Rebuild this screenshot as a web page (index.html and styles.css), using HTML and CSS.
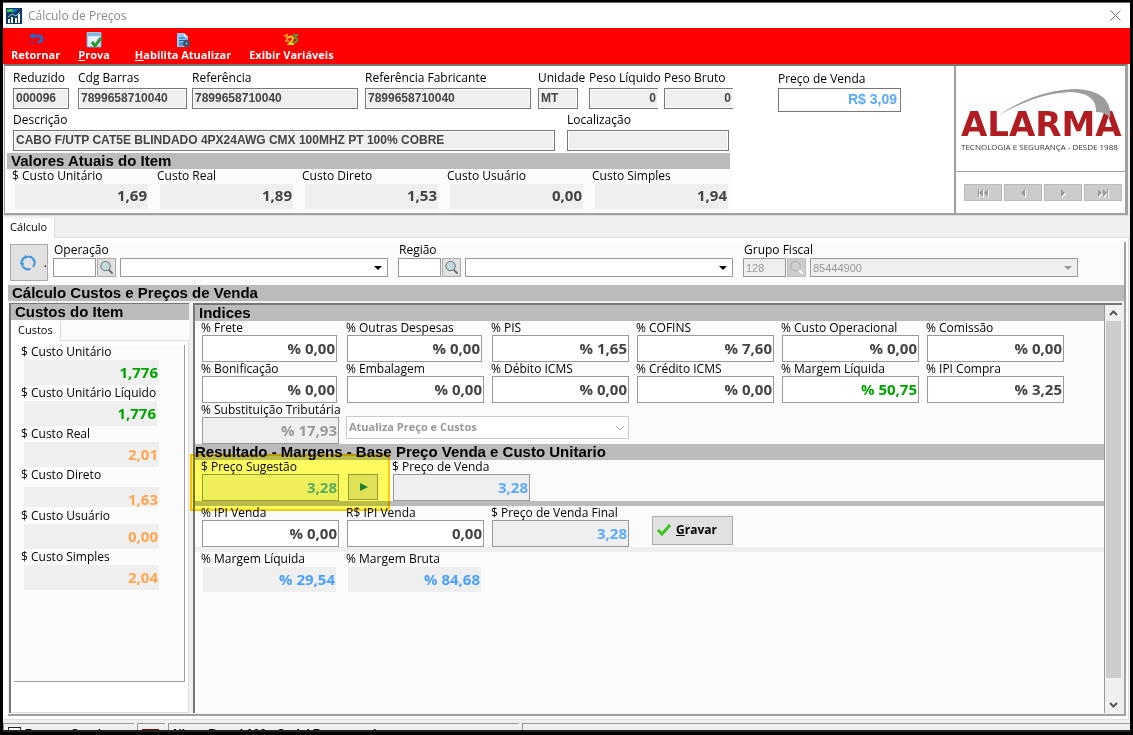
FILE: index.html
```html
<!DOCTYPE html>
<html lang="pt-BR">
<head>
<meta charset="utf-8">
<title>Cálculo de Preços</title>
<link rel="stylesheet" href="styles.css">
</head>
<body>
<div class="window">
  <header class="titlebar">
    <svg class="app-icon" viewBox="0 0 16 16" aria-hidden="true"><rect width="16" height="16" fill="#0d3a63"/><path d="M1 1h8l-2 3H1z" fill="#3ec54a"/><path d="M6 1h6l-4 4z" fill="#1473d4"/><path d="M2 11h2v4H2zM5 9h2v6H5zM9 10h2v5H9zM12 6h2v9h-2z" fill="#fff"/><path d="M2 9l4-3 4 2 4-4" stroke="#9ec9ea" fill="none"/></svg>
    <h1 class="title">Cálculo de Preços</h1>
    <button class="close" aria-label="Fechar"><svg viewBox="0 0 11 11"><path d="M.5.5l10 10M10.500.5l-10 10" stroke="#777" fill="none"/></svg></button>
  </header>

  <nav class="toolbar">
    <button class="tool"><svg viewBox="0 0 16 16"><path d="M5 4h5q4 0 4 3t-4 3" fill="none" stroke="#1671d9" stroke-width="2.500"/><path d="M1 4L6 1v6z" fill="#1671d9"/><path d="M2.500 9v3M5.500 9v3M8 10v2" stroke="#5a3a9a"/></svg><span>Retornar</span></button>
    <button class="tool proof"><svg viewBox="0 0 16 16"><path d="M1 0h14v15H1z" fill="#d9ecf6" stroke="#6ba6cc"/><path d="M2 1h12v3H2z" fill="#7fb9e0"/><path d="M3 6h9M3 8h7" stroke="#fff"/><path d="M6 10l3 4 6-8" fill="none" stroke="#2f9a38" stroke-width="3"/></svg><span><u>P</u>rova</span></button>
    <button class="tool"><svg viewBox="0 0 16 16"><path d="M2 1h7l4 4v10H2z" fill="#8fc7f5"/><path d="M9 1v4h4z" fill="#d9eeff"/><path d="M4 6h6M4 8.500h6M4 11h4M4 13h4" stroke="#1762ab"/><circle cx="11.500" cy="11.500" r="2.500" fill="none" stroke="#3b5068" stroke-width="2"/><path d="M11.500 7.500v8M7.500 11.500h8M9 9l5 5M14 9l-5 5" stroke="#3b5068"/><circle cx="11.500" cy="11.500" r="1" fill="#9fb9cf"/></svg><span><u>H</u>abilita Atualizar</span></button>
    <button class="tool"><svg viewBox="0 0 16 16"><path d="M1 4l3-1v6M2 9h4" stroke="#ff8a1f" stroke-width="2" fill="none"/><path d="M5 6q3-3 5 0 0 2-4 6h5" stroke="#ffd21f" stroke-width="2" fill="none"/><path d="M10 3h4l-2 3q4 1 1 4-2 1-3 0" stroke="#4d9f32" stroke-width="2" fill="none"/></svg><span>Exibir Variáveis</span></button>
  </nav>

  <section class="summary">
    <div class="item">
      <div class="row ids">
        <label class="field"><span>Reduzido</span><input class="code" value="000096" readonly></label>
        <label class="field"><span>Cdg Barras</span><input class="code" value="7899658710040" readonly></label>
        <label class="field"><span>Referência</span><input class="code" value="7899658710040" readonly></label>
        <label class="field"><span>Referência Fabricante</span><input class="code" value="7899658710040" readonly></label>
        <label class="field unit"><span>Unidade</span><input class="code" value="MT" readonly></label>
        <label class="field"><span>Peso Líquido</span><input class="code weight" value="0" readonly></label>
        <label class="field"><span>Peso Bruto</span><input class="code weight" value="0" readonly></label>
      </div>
      <div class="row descr">
        <label class="field"><span>Descrição</span><input class="code" value="CABO F/UTP CAT5E BLINDADO 4PX24AWG CMX 100MHZ PT 100% COBRE" readonly></label>
        <label class="field"><span>Localização</span><input class="code" value="" readonly></label>
      </div>
      <h2 class="bar">Valores Atuais do Item</h2>
      <div class="current">
        <label class="cost"><span>$ Custo Unitário</span><input class="num flat" value="1,69" readonly></label>
        <label class="cost"><span>Custo Real</span><input class="num flat" value="1,89" readonly></label>
        <label class="cost"><span>Custo Direto</span><input class="num flat" value="1,53" readonly></label>
        <label class="cost"><span>Custo Usuário</span><input class="num flat" value="0,00" readonly></label>
        <label class="cost"><span>Custo Simples</span><input class="num flat" value="1,94" readonly></label>
      </div>
    </div>
    <div class="sale">
      <label class="field"><span>Preço de Venda</span><input class="price" value="R$ 3,09"></label>
    </div>
    <aside class="brand">
      <div class="logo">
        <svg class="swoosh" viewBox="0 0 120 30" aria-hidden="true"><path d="M0 29Q40 1 82 1Q117 4 114 30Q108 23 100 24Q101 5 74 4Q40 5 0 29z" fill="#9d9d9b"/></svg>
        <strong>ALARMA</strong>
        <small>TECNOLOGIA E SEGURANÇA - DESDE 1988</small>
      </div>
      <div class="pager">
        <button aria-label="Primeiro" disabled><svg viewBox="0 0 12 10"><path d="M1 1h1v8H1zM6 1v8L2 5zM11 1v8L7 5z"/></svg></button>
        <button aria-label="Anterior" disabled><svg viewBox="0 0 12 10"><path d="M8 1v8L4 5z"/></svg></button>
        <button aria-label="Próximo" disabled><svg viewBox="0 0 12 10"><path d="M4 1l4 4-4 4z"/></svg></button>
        <button aria-label="Último" disabled><svg viewBox="0 0 12 10"><path d="M10 1h1v8h-1zM6 1v8l4-4zM1 1v8l4-4z"/></svg></button>
      </div>
    </aside>
  </section>

  <div class="tabs"><button class="tab">Cálculo</button></div>

  <main class="page">
    <div class="filters">
      <button class="refresh" aria-label="Atualizar"><svg viewBox="0 0 16 16"><g fill="none" stroke="#3a95dc" stroke-width="2"><path d="M6 1.500Q1 4 1.500 9"/><path d="M3 12Q7 16 10.500 13.500"/><path d="M13 12Q16 8 13.500 4"/><path d="M8 1.500q3 0 5 2"/></g><path d="M5 0l4 2-4 2zM0 8h4l-1 5zM12 3l3 1-2 3z" fill="#3a95dc"/></svg><span>.</span></button>
      <div class="lookup">
        <label for="op">Operação</label>
        <div class="lookup-row"><input id="op"><button class="search" aria-label="Buscar operação"><svg viewBox="0 0 16 16"><circle cx="7" cy="6.500" r="5" fill="#c4dbe0" stroke="#666"/><path d="M10.500 10.500l4 4" stroke="#666" stroke-width="2"/></svg></button><span class="combo"><select aria-label="Operação"><option></option></select><i class="caret"></i></span></div>
      </div>
      <div class="lookup">
        <label for="reg">Região</label>
        <div class="lookup-row"><input id="reg"><button class="search" aria-label="Buscar região"><svg viewBox="0 0 16 16"><circle cx="7" cy="6.500" r="5" fill="#c4dbe0" stroke="#666"/><path d="M10.500 10.500l4 4" stroke="#666" stroke-width="2"/></svg></button><span class="combo"><select aria-label="Região"><option></option></select><i class="caret"></i></span></div>
      </div>
      <div class="lookup off">
        <label for="grp">Grupo Fiscal</label>
        <div class="lookup-row"><input id="grp" value="128" disabled><button class="search" aria-label="Buscar grupo fiscal" disabled><svg viewBox="0 0 16 16"><circle cx="7" cy="6.500" r="5" fill="#d0d0d0" stroke="#aaa"/><path d="M10.500 10.500l4 4" stroke="#fff" stroke-width="2"/></svg></button><span class="combo"><select aria-label="Grupo Fiscal" disabled><option>85444900</option></select><i class="caret"></i></span></div>
      </div>
    </div>
    <h2 class="bar">Cálculo Custos e Preços de Venda</h2>

    <div class="panels">
      <section class="costs">
        <h2 class="bar">Custos do Item</h2>
        <div class="subtabs"><button class="tab">Custos</button></div>
        <div class="costs-page">
          <div class="costs-list">
            <label class="cost"><span>$ Custo Unitário</span><input class="num flat green" value="1,776" readonly></label>
            <label class="cost"><span>$ Custo Unitário Líquido</span><input class="num flat green narrow" value="1,776" readonly></label>
            <label class="cost"><span>$ Custo Real</span><input class="num flat orange" value="2,01" readonly></label>
            <label class="cost"><span>$ Custo Direto</span><input class="num flat orange short" value="1,63" readonly></label>
            <label class="cost"><span>$ Custo Usuário</span><input class="num flat orange" value="0,00" readonly></label>
            <label class="cost"><span>$ Custo Simples</span><input class="num flat orange" value="2,04" readonly></label>
          </div>
        </div>
      </section>

      <section class="indices">
        <div class="indices-body">
          <h2 class="bar">Indices</h2>
          <div class="grid">
            <label class="cell"><span>% Frete</span><input class="num narrow" value="% 0,00"></label>
            <label class="cell"><span>% Outras Despesas</span><input class="num narrow" value="% 0,00"></label>
            <label class="cell"><span>% PIS</span><input class="num" value="% 1,65"></label>
            <label class="cell"><span>% COFINS</span><input class="num" value="% 7,60"></label>
            <label class="cell"><span>% Custo Operacional</span><input class="num" value="% 0,00"></label>
            <label class="cell"><span>% Comissão</span><input class="num" value="% 0,00"></label>
            <label class="cell"><span>% Bonificação</span><input class="num narrow" value="% 0,00"></label>
            <label class="cell"><span>% Embalagem</span><input class="num" value="% 0,00"></label>
            <label class="cell"><span>% Débito ICMS</span><input class="num" value="% 0,00"></label>
            <label class="cell"><span>% Crédito ICMS</span><input class="num" value="% 0,00"></label>
            <label class="cell"><span>% Margem Líquida</span><input class="num green" value="% 50,75"></label>
            <label class="cell"><span>% IPI Compra</span><input class="num" value="% 3,25"></label>
            <label class="cell"><span>% Substituição Tributária</span><input class="num off" value="% 17,93" disabled></label>
            <div class="mode"><select aria-label="Modo de atualização" disabled><option>Atualiza Preço e Custos</option></select><svg viewBox="0 0 10 6"><path d="M1 1l4 4 4-4" fill="none" stroke="#aaa"/></svg></div>
          </div>
          <div class="result">
            <h2 class="bar">Resultado - Margens - Base Preço Venda e Custo Unitario</h2>
            <div class="suggest">
              <label class="cell"><span>$ Preço Sugestão</span><input class="num off blue" value="3,28" readonly></label>
              <button class="apply" aria-label="Aplicar preço sugerido"><svg viewBox="0 0 10 8"><path d="M1 0l8 4-8 4z" fill="#1b7f78"/></svg></button>
              <label class="cell"><span>$ Preço de Venda</span><input class="num off blue" value="3,28" readonly></label>
            </div>
            <div class="highlight"></div>
          </div>
          <hr class="rule">
          <div class="grid">
            <label class="cell"><span>% IPI Venda</span><input class="num" value="% 0,00"></label>
            <label class="cell"><span>R$ IPI Venda</span><input class="num" value="0,00"></label>
            <label class="cell"><span>$ Preço de Venda Final</span><input class="num off blue" value="3,28" readonly></label>
            <button class="save"><svg viewBox="0 0 14 12"><path d="M1 6l4 4 8-9" fill="none" stroke="#3cc41f" stroke-width="3"/></svg><span><u>G</u>ravar</span></button>
          </div>
          <hr class="rule light">
          <div class="grid margins">
            <label class="cost"><span>% Margem Líquida</span><input class="num flat sky" value="% 29,54" readonly></label>
            <label class="cost"><span>% Margem Bruta</span><input class="num flat sky" value="% 84,68" readonly></label>
          </div>
        </div>
        <div class="scroll">
          <button aria-label="Rolar para cima"><svg viewBox="0 0 9 6"><path d="M1 5l3.500-3.500L8 5" fill="none" stroke="#555" stroke-width="2"/></svg></button>
          <div class="track"><div class="thumb"></div></div>
          <button aria-label="Rolar para baixo"><svg viewBox="0 0 9 6"><path d="M1 1l3.500 3.500L8 1" fill="none" stroke="#555" stroke-width="2"/></svg></button>
        </div>
      </section>
    </div>
  </main>

  <footer class="status">
    <div class="slot first"><i class="box"></i>Pessoa Geral</div>
    <div class="slot second"><i class="flag"></i></div>
    <div class="slot third">Nivea Brand 100 - Serial Programado</div>
    <div class="slot"></div>
  </footer>
</div>
</body>
</html>
```
FILE: styles.css
```css
* { box-sizing: border-box; }
html, body { height: 100%; }
body { margin: 0; padding: 2px 3px 3px; background: #000; font: 12px/14px "Open Sans", "Noto Sans", sans-serif; color: #000; overflow: hidden; }
button, input, select { font: inherit; color: inherit; margin: 0; padding: 0; border-radius: 0; min-width: 0; }
button { border: 0; background: none; }
h1, h2 { margin: 0; }
svg { display: block; }
label { display: block; white-space: nowrap; }

.window { display: flex; flex-direction: column; height: 100%; background: #f0f0f0; border-top: 1px solid #666; border-bottom: 2px solid #222; overflow: hidden; }

.titlebar { display: flex; align-items: center; flex: none; height: 25px; padding: 0 9px 0 3px; background: #fff; }
.app-icon { width: 16px; height: 16px; }
.title { flex: 1; margin-left: 6px; font-size: 12px; font-weight: 400; color: #888; }
.close svg { width: 11px; height: 11px; }

.toolbar { display: flex; flex: none; height: 36px; gap: 18px; padding: 4px 8px 0; background: #f00; }
.tool { display: flex; flex-direction: column; align-items: center; color: #fff; font: bold 11px/14px "Open Sans", sans-serif; }
.tool svg { width: 16px; height: 16px; flex: none; }
.proof { margin-right: 7px; }

.summary { display: flex; flex: none; height: 151px; margin: 0 2px 0 1px; background: #fff; border: solid #a0a0a0; border-width: 2px 3px 2px 1px; border-top-color: #777; }
.item { flex: none; width: 730px; padding: 5px 0 0 2px; }
.row { display: grid; padding-left: 6px; height: 42px; }
.ids { grid-template-columns: 65px 114px 173px 173px 51px 75px 69px; }
.ids .field { padding-right: 7px; }
.ids .field:first-child { padding-right: 9px; }
.ids .field:nth-child(2) { padding-right: 5px; }
.ids .unit { padding-right: 11px; }
.ids .unit ~ .field { padding-right: 0; }
.ids .unit + .field { padding-right: 6px; }
.descr { grid-template-columns: 542px 162px; column-gap: 12px; }
.field span { display: block; height: 17px; line-height: 13px; }
.field input { display: block; width: 100%; }
.code { height: 21px; padding: 0 2px 2px; border: 1px solid #777; background: #efefef; box-shadow: inset 0 0 0 1px #fff; color: #444; font: bold 12px "Liberation Sans", sans-serif; }
.weight { text-align: right; border-right: 0; }
.bar { height: 16px; padding-left: 4px; background: #bbb; font: bold 15px/16px "Liberation Sans", Arial, sans-serif; white-space: nowrap; }
.item .bar { width: 723px; margin-top: -2px; }
.current { display: grid; grid-template-columns: repeat(5, 145px); width: 726px; padding: 0 0 1px 5px; background: #fbfbfb; }
.cost span { display: block; height: 15px; line-height: 14px; }
.current span { line-height: 13px; }
.num { display: block; width: 137px; height: 27px; padding: 0 1px 2px; border: 1px solid #999; background: #fff; color: #444; text-align: right; font: bold 15px "Open Sans", sans-serif; }
.num.narrow { width: 135px; }
.num.flat { width: 133px; height: 25px; margin-left: 3px; border: 0; background: #efefef; }
.current .num.flat { padding-bottom: 3px; }
.num.off { background: #efefef; }
.num:disabled { color: #999; }
.num.green { color: #00a400; }
.num.orange { color: #ffa54f; }
.num.blue { color: #5aaaff; }
.num.sky { color: #4aa0ff; }

.sale { flex: 1; padding: 6px 0 0 43px; }
.sale .field { width: 123px; }
.sale .field span { height: 16px; }
.price { height: 24px; padding: 0 3px 2px; border: 1px solid #777; color: #5aaaff; text-align: right; font: bold 14px "Liberation Sans", sans-serif; }
.brand { display: flex; flex-direction: column; width: 171px; border-left: 2px solid #a0a0a0; }
.logo { position: relative; display: flex; flex-direction: column; height: 106px; padding: 41px 5px 0; border-bottom: 1px solid #a0a0a0; white-space: nowrap; }
.logo strong { font: bold 34px/34px "DejaVu Sans", sans-serif; color: #b01c1f; }
.logo small { font: 8px/10px "Open Sans", sans-serif; color: #333; padding-top: 1px; }
.swoosh { position: absolute; left: 40px; top: 22px; width: 120px; height: 30px; }
.pager { display: flex; gap: 2px; padding: 12px 3px 12px 8px; }
.pager button { display: flex; align-items: center; justify-content: center; flex: none; width: 38px; height: 17px; background: #ccc; border: 1px solid #bbb; }
.pager svg { width: 12px; height: 10px; fill: #999; filter: drop-shadow(1px 1px 0 #fff); }

.tabs { display: flex; flex: none; height: 23px; padding-top: 2px; border-bottom: 1px solid #ddd; border-top: 1px solid #ddd; }
.tab { background: #fff; border: solid #ddd; border-width: 0 1px 0 0; padding: 0 7px 2px; margin-bottom: -1px; font-size: 11px; }
.page { display: flex; flex-direction: column; flex: 1; min-height: 0; margin-right: 1px; padding: 4px 2px 3px 5px; background: #fff; border-bottom: 1px solid #ddd; border-right: 1px solid #ddd; }
.filters { display: flex; flex: none; height: 43px; padding: 2px 0 0 2px; background: #fbfbfb; border-right: 2px solid #a0a0a0; }
.refresh { display: flex; align-items: center; justify-content: flex-end; gap: 8px; flex: none; width: 38px; height: 37px; margin-right: 5px; background: #e1e1e1; border: 1px solid #aaa; }
.refresh svg { width: 16px; height: 16px; }
.lookup { width: 335px; margin-right: 10px; }
.lookup label { height: 14px; line-height: 11px; padding-left: 1px; }
.lookup-row { display: flex; height: 19px; }
.lookup-row input { width: 43px; padding: 0 2px; border: 1px solid #999; background: #fff; font: 11px "Liberation Sans", sans-serif; }
.search { display: flex; align-items: center; justify-content: center; flex: none; width: 19px; margin: 0 4px 0 1px; background: #e1e1e1; border: 1px solid #aaa; }
.search svg { width: 15px; height: 15px; }
.combo { position: relative; flex: 1; }
.combo select { display: block; width: 100%; height: 19px; padding: 0 2px; appearance: none; border: 1px solid #999; background: #fff; font: 11px "Liberation Sans", sans-serif; opacity: 1; }
.caret { position: absolute; right: 6px; top: 8px; border: 4px solid transparent; border-top-color: #000; border-bottom: 0; pointer-events: none; }
.lookup.off input, .lookup.off select { background: #efefef; color: #999; }
.off .search { background: #ccc; border-color: #bbb; }
.off .caret { border-top-color: #999; }
.page > .bar { flex: none; border-right: 2px solid #a0a0a0; }

.panels { display: flex; flex: 1; min-height: 0; padding: 2px 2px 1px 1px; background: #f0f0f0; border: solid #a0a0a0; border-width: 0 2px 2px 0; }
.costs { display: flex; flex-direction: column; flex: none; width: 180px; margin-right: 4px; border: solid #777; border-width: 1px 0 0 2px; background: #fbfbfb; }
.subtabs { display: flex; height: 20px; margin-top: 1px; border-bottom: 1px solid #ddd; }
.costs-page { flex: 1; padding: 4px 3px 30px; background: #fff; border: solid #ddd; border-width: 0 1px 1px 0; }
.costs-list { height: 100%; padding-left: 7px; background: #fbfbfb; border: solid #a0a0a0; border-width: 0 1px 1px 0; }
.costs-list .cost { height: 41px; }
.costs-list .num { width: 135px; }
.costs-list .num.narrow { width: 133px; }
.costs-list .num.short { height: 20px; margin-top: 4px; padding: 4px 1px 0; }

.indices { display: flex; flex: 1; min-width: 0; border: solid #777; border-width: 2px 0 0 2px; background: #fbfbfb; }
.indices-body { flex: 1; min-width: 0; }
.grid { display: grid; grid-template-columns: repeat(6, 145px); padding-left: 6px; }
.cell { height: 41px; }
.cell span { display: block; height: 14px; line-height: 13px; }
.cell .num { margin-left: 1px; }
.mode { position: relative; grid-column: span 2; width: 283px; padding-top: 13px; }
.mode select { display: block; width: 100%; height: 23px; padding: 0 2px 2px; appearance: none; border: 1px solid #ccc; background: #fff; color: #999; font: bold 11px "Open Sans", sans-serif; opacity: 1; }
.mode svg { position: absolute; right: 4px; top: 22px; width: 10px; height: 6px; }
.result { position: relative; }
.result .bar { padding-left: 0; }
.suggest { display: flex; padding-left: 6px; height: 41px; }
.apply { display: flex; align-items: center; justify-content: center; width: 30px; height: 26px; margin: 14px 14px 0 9px; padding-left: 2px; background: #e1e1e1; border: 1px solid #999; }
.apply svg { width: 10px; height: 8px; }
.highlight { position: absolute; left: -5px; top: 10px; width: 200px; height: 57px; background: #ffff60; border: 2px solid #ffd000; mix-blend-mode: multiply; pointer-events: none; }
.rule { height: 5px; margin: 0; border: 0; background: #bbb; }
.rule.light { background: #efefef; }
.save { display: flex; align-items: center; gap: 5px; width: 81px; height: 29px; margin: 10px 0 0 16px; padding: 0 0 2px 4px; background: #e1e1e1; border: 1px solid #aaa; font: bold 12px "Open Sans", sans-serif; }
.save svg { width: 14px; height: 12px; }
.margins .num { margin-left: 2px; }
.scroll { display: flex; flex-direction: column; width: 18px; padding-right: 1px; border-left: 1px solid #999; background: #f0f0f0; }
.scroll button { display: flex; align-items: center; justify-content: center; height: 16px; }
.scroll svg { width: 9px; height: 6px; }
.track { flex: 1; padding: 0 0 0 1px; }
.thumb { height: 95%; background: #ccc; }

.status { display: flex; flex: none; gap: 3px; height: 10px; padding-top: 3px; overflow: hidden; }
.slot { display: flex; flex: 1; gap: 4px; padding: 3px 4px 0; border: solid #999; border-width: 1px 0 0 1px; font: bold 12px/14px "Liberation Sans", sans-serif; white-space: nowrap; }
.slot.first { flex: none; width: 131px; }
.slot.second { flex: none; width: 28px; }
.slot.third { flex: none; width: 351px; }
.box { width: 13px; height: 12px; border: 1px solid #222; background: #fff; }
.flag { width: 17px; height: 8px; margin-top: 2px; background: #701010; }
```
